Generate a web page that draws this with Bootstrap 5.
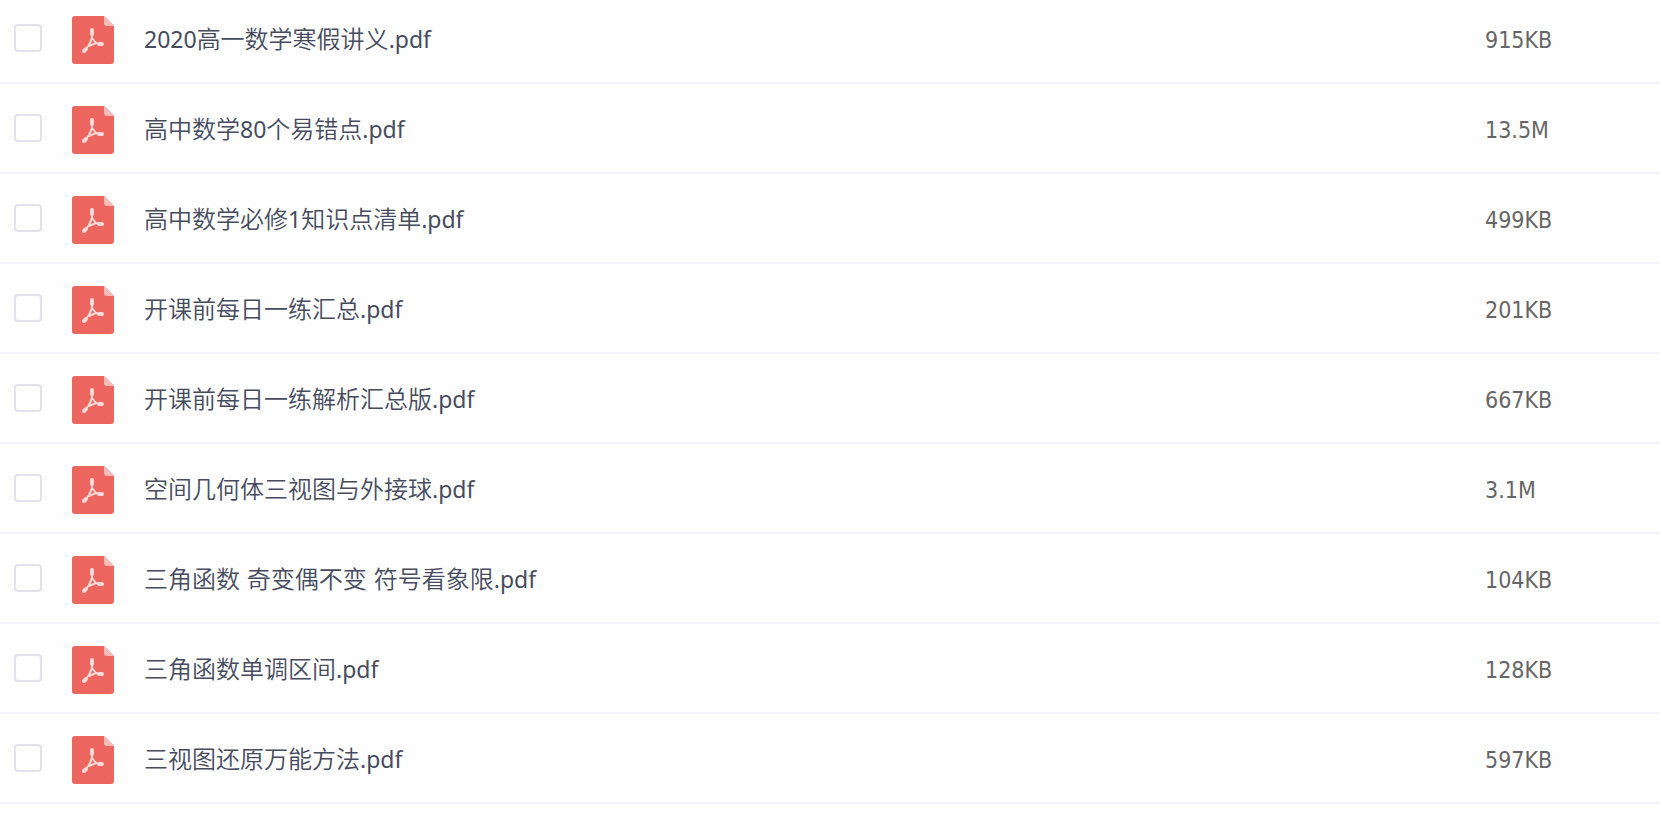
<!DOCTYPE html>
<html lang="zh-CN">
<head>
<meta charset="utf-8">
<meta name="viewport" content="width=device-width, initial-scale=1">
<title>文件列表</title>
<link href="https://cdn.jsdelivr.net/npm/bootstrap@5.3.0/dist/css/bootstrap.min.css" rel="stylesheet">
<style>
body { background: #fefefe; font-family: "DejaVu Sans Condensed", "DejaVu Sans", "Noto Sans CJK SC", sans-serif; }
.file-table { table-layout: fixed; --bs-table-bg: transparent; }
.file-table td { padding: 22px 0 18px; border-bottom: 2px solid #f3f4fa; line-height: 32px; }
.file-table tr:first-child td { padding-top: 16px; }
.col-pick { width: 72px; }
.col-type { width: 72px; }
.col-size { width: 175px; }
.file-table .form-check-input { width: 28px; height: 28px; margin: 0 0 4px 14px; border: 2px solid #e2e2ec; border-radius: 4px; background-color: #fff; }
.file-name { font-size: 24px; font-weight: 350; color: #464c5e; }
.latin { font-family: "Noto Sans", sans-serif; font-size: 23px; font-weight: 400; line-height: 24px; }
.file-size { font-size: 23px; color: #666; }
</style>
</head>
<body>
<svg class="d-none" aria-hidden="true">
  <symbol id="pdf" viewBox="0 0 42 48">
    <path fill="#ec655f" d="M3 0H32L42 10V45Q42 48 39 48H3Q0 48 0 45V3Q0 0 3 0Z"/>
    <path fill="#f6bbb6" d="M32 0L42 10H35Q32 10 32 7Z"/>
    <g fill="none" stroke="#fbd9d6" stroke-linecap="round" stroke-linejoin="round">
      <path stroke-width="2" d="M20 17V22L17 29L13 34M20 22L24 27L29 28M17 30L24 27"/>
      <path stroke-width="4" d="M20 14V18M12 35L14 33M27 28H30"/>
    </g>
  </symbol>
</svg>
<main>
  <table class="table file-table align-middle mb-0" aria-label="文件列表">
    <colgroup><col class="col-pick"><col class="col-type"><col><col class="col-size"></colgroup>
    <tbody>
      <tr><td><input class="form-check-input d-block" type="checkbox" id="f1"></td><td><svg class="d-block" width="42" height="48" aria-hidden="true"><use href="#pdf"/></svg></td><td class="file-name"><label for="f1"><span class="latin">2020</span>高一数学寒假讲义<span class="latin">.pdf</span></label></td><td class="file-size">915KB</td></tr>
      <tr><td><input class="form-check-input d-block" type="checkbox" id="f2"></td><td><svg class="d-block" width="42" height="48" aria-hidden="true"><use href="#pdf"/></svg></td><td class="file-name"><label for="f2">高中数学<span class="latin">80</span>个易错点<span class="latin">.pdf</span></label></td><td class="file-size">13.5M</td></tr>
      <tr><td><input class="form-check-input d-block" type="checkbox" id="f3"></td><td><svg class="d-block" width="42" height="48" aria-hidden="true"><use href="#pdf"/></svg></td><td class="file-name"><label for="f3">高中数学必修<span class="latin">1</span>知识点清单<span class="latin">.pdf</span></label></td><td class="file-size">499KB</td></tr>
      <tr><td><input class="form-check-input d-block" type="checkbox" id="f4"></td><td><svg class="d-block" width="42" height="48" aria-hidden="true"><use href="#pdf"/></svg></td><td class="file-name"><label for="f4">开课前每日一练汇总<span class="latin">.pdf</span></label></td><td class="file-size">201KB</td></tr>
      <tr><td><input class="form-check-input d-block" type="checkbox" id="f5"></td><td><svg class="d-block" width="42" height="48" aria-hidden="true"><use href="#pdf"/></svg></td><td class="file-name"><label for="f5">开课前每日一练解析汇总版<span class="latin">.pdf</span></label></td><td class="file-size">667KB</td></tr>
      <tr><td><input class="form-check-input d-block" type="checkbox" id="f6"></td><td><svg class="d-block" width="42" height="48" aria-hidden="true"><use href="#pdf"/></svg></td><td class="file-name"><label for="f6">空间几何体三视图与外接球<span class="latin">.pdf</span></label></td><td class="file-size">3.1M</td></tr>
      <tr><td><input class="form-check-input d-block" type="checkbox" id="f7"></td><td><svg class="d-block" width="42" height="48" aria-hidden="true"><use href="#pdf"/></svg></td><td class="file-name"><label for="f7">三角函数 奇变偶不变 符号看象限<span class="latin">.pdf</span></label></td><td class="file-size">104KB</td></tr>
      <tr><td><input class="form-check-input d-block" type="checkbox" id="f8"></td><td><svg class="d-block" width="42" height="48" aria-hidden="true"><use href="#pdf"/></svg></td><td class="file-name"><label for="f8">三角函数单调区间<span class="latin">.pdf</span></label></td><td class="file-size">128KB</td></tr>
      <tr><td><input class="form-check-input d-block" type="checkbox" id="f9"></td><td><svg class="d-block" width="42" height="48" aria-hidden="true"><use href="#pdf"/></svg></td><td class="file-name"><label for="f9">三视图还原万能方法<span class="latin">.pdf</span></label></td><td class="file-size">597KB</td></tr>
    </tbody>
  </table>
</main>
<script src="https://cdn.jsdelivr.net/npm/bootstrap@5.3.0/dist/js/bootstrap.bundle.min.js"></script>
</body>
</html>
